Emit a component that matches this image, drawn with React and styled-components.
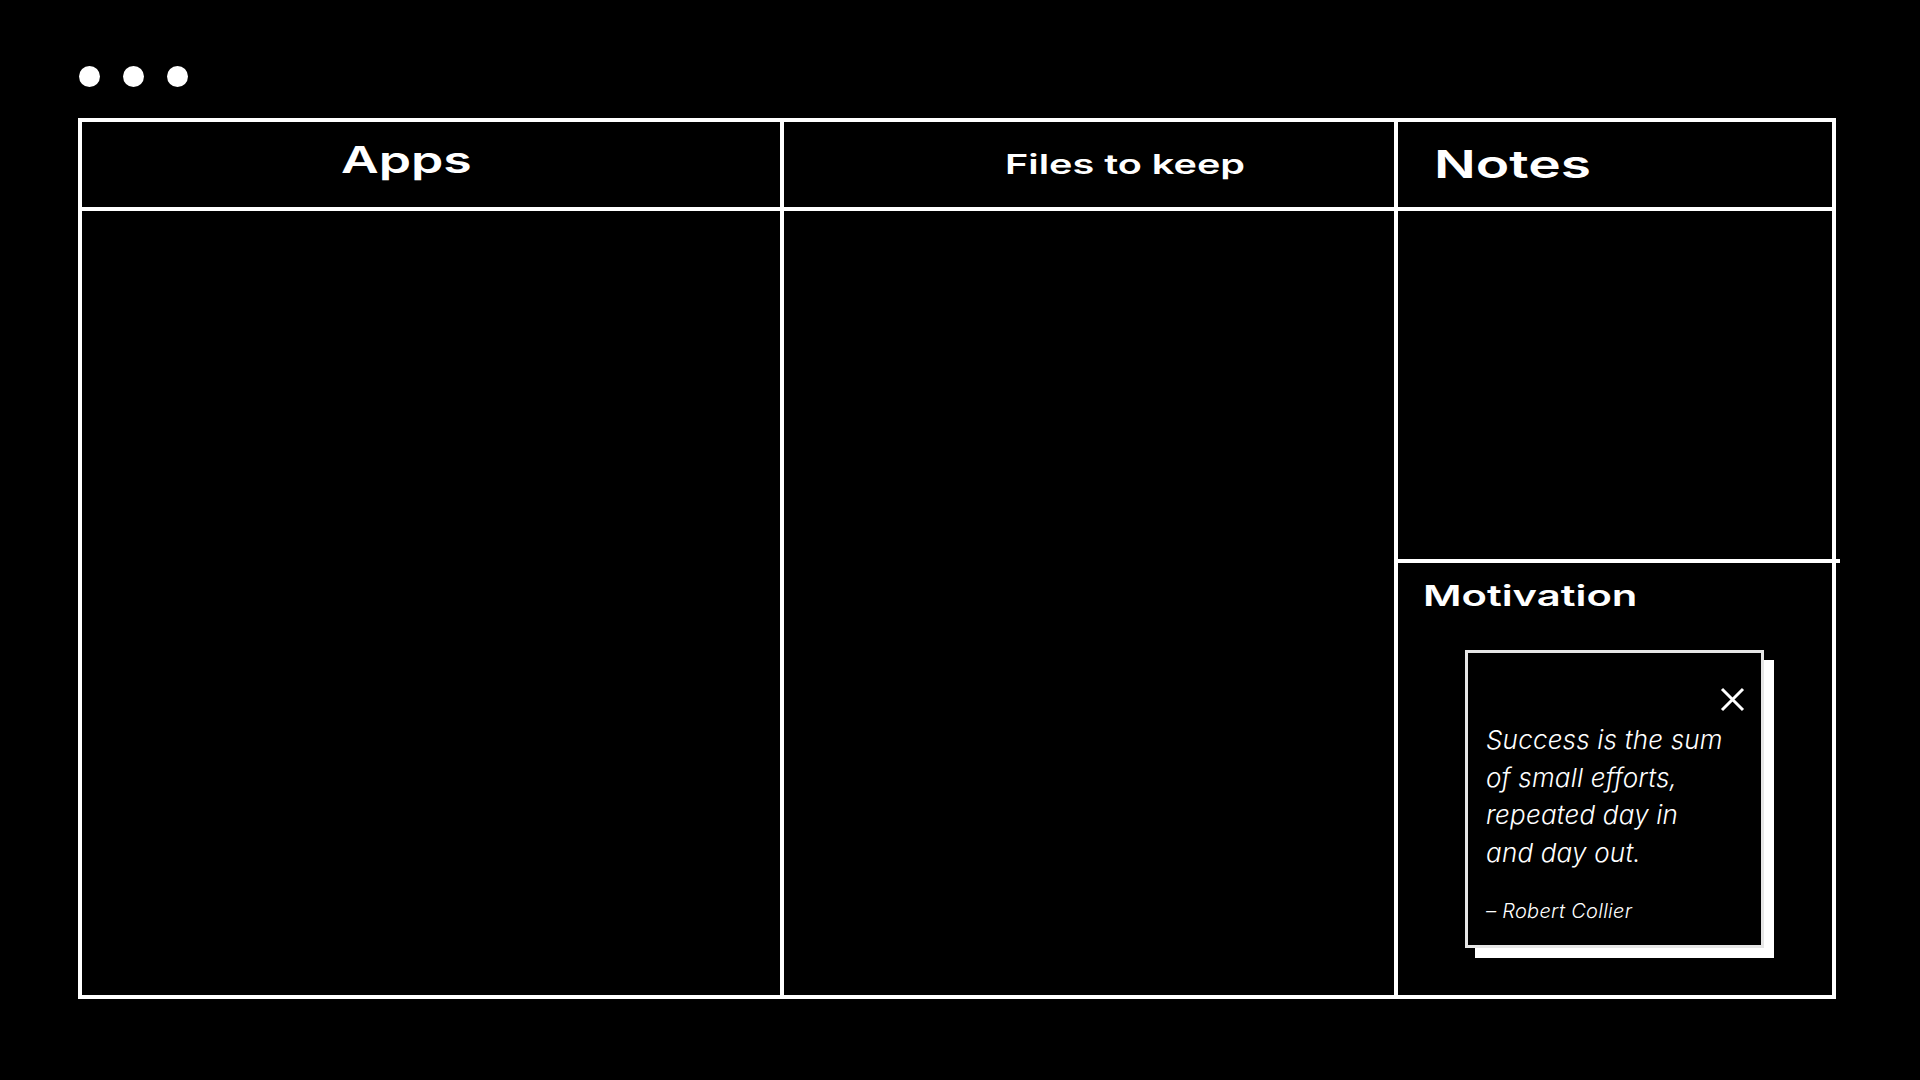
import React from 'react'
import styled, { createGlobalStyle } from 'styled-components'

const GlobalStyle = createGlobalStyle`
  html, body {
    margin: 0;
    padding: 0;
    background: #000;
  }
  body {
    font-family: Inter, "Noto Sans", sans-serif;
    color: #fff;
  }
`

const quote = ['Success is the sum', 'of small efforts,', 'repeated day in', 'and day out.']

const App = () => {
  return (
    <>
      <GlobalStyle />
      <Page>
        <Dots>
          <Dot />
          <Dot />
          <Dot />
        </Dots>
        <Frame>
          <Column>
            <Header $pad={259} $lift={10}>
              <Title $size={37}>Apps</Title>
            </Header>
          </Column>
          <Column>
            <Header $pad={221}>
              <Title $size={27.5} $stretch={1.44}>Files to keep</Title>
            </Header>
          </Column>
          <Column $last>
            <Header $pad={36}>
              <Title $size={38.5} $stretch={1.43}>Notes</Title>
            </Header>
            <NotesBody />
            <Divider />
            <Motivation>
              <Title $size={29} $stretch={1.44}>Motivation</Title>
              <QuoteCard>
                <CloseRow>
                  <CloseButton aria-label="close">
                    <svg width="25" height="25" viewBox="0 0 25 25">
                      <path d="M2 2 L23 23 M23 2 L2 23" stroke="#fff" strokeWidth="3" fill="none" />
                    </svg>
                  </CloseButton>
                </CloseRow>
                <Quote>
                  {quote.map((line, i) => (
                    <span key={i}>{line}<br /></span>
                  ))}
                </Quote>
                <Author>– Robert Collier</Author>
              </QuoteCard>
            </Motivation>
          </Column>
        </Frame>
      </Page>
    </>
  )
}

export default App

const Page = styled.div`
  width: 1920px;
  height: 1080px;
  box-sizing: border-box;
  padding: 66px 0 0 78px;
  background: #000;
  overflow: hidden;
`
const Dots = styled.div`
  display: flex;
  gap: 23px;
  padding-left: 1px;
  margin-bottom: 31px;
`
const Dot = styled.span`
  width: 21px;
  height: 21px;
  border-radius: 50%;
  background: #fff;
`
const Frame = styled.div`
  width: 1758px;
  height: 881px;
  box-sizing: border-box;
  border: 4px solid #fff;
  display: grid;
  grid-template-columns: 702px 614px 1fr;
`
const Column = styled.div`
  display: flex;
  flex-direction: column;
  box-sizing: border-box;
  border-right: ${(p) => (p.$last ? 'none' : '4px solid #fff')};
  min-width: 0;
`
const Header = styled.div`
  height: 89px;
  box-sizing: border-box;
  border-bottom: 4px solid #fff;
  display: flex;
  align-items: center;
  padding-left: ${(p) => p.$pad}px;
  padding-bottom: ${(p) => p.$lift || 0}px;
`
const Title = styled.h2`
  margin: 0;
  display: inline-block;
  font-family: Inter, "Noto Sans", sans-serif;
  font-weight: 600;
  font-size: ${(p) => p.$size}px;
  line-height: 1;
  color: #fff;
  white-space: nowrap;
  transform: scaleX(${(p) => p.$stretch || 1.4});
  transform-origin: left center;
`
const NotesBody = styled.div`
  height: 348px;
`
const Divider = styled.div`
  height: 4px;
  background: #fff;
  margin-right: -8px;
`
const Motivation = styled.div`
  flex: 1;
  padding: 18px 0 0 25px;
  display: flex;
  flex-direction: column;
  align-items: flex-start;
`
const QuoteCard = styled.div`
  margin: 40px 0 0 42px;
  width: 299px;
  height: 298px;
  box-sizing: border-box;
  border: 3px solid #e6e6e6;
  background: #000;
  box-shadow: 10px 10px 0 0 #fff;
  padding: 34px 16px 0 18px;
  display: flex;
  flex-direction: column;
`
const CloseRow = styled.div`
  display: flex;
  justify-content: flex-end;
`
const CloseButton = styled.button`
  background: none;
  border: none;
  padding: 0;
  width: 25px;
  height: 25px;
  cursor: pointer;
  display: flex;
`
const Quote = styled.p`
  margin: 9px 0 0;
  font-family: Inter, "Noto Sans", sans-serif;
  font-style: italic;
  font-weight: 300;
  font-size: 26px;
  line-height: 37.5px;
  letter-spacing: 0.2px;
  color: #fff;
  white-space: nowrap;
`
const Author = styled.p`
  margin: 28px 0 0;
  font-family: Inter, "Noto Sans", sans-serif;
  font-style: italic;
  font-weight: 300;
  font-size: 20px;
  line-height: 1.2;
  letter-spacing: 0.3px;
  color: #fff;
`
